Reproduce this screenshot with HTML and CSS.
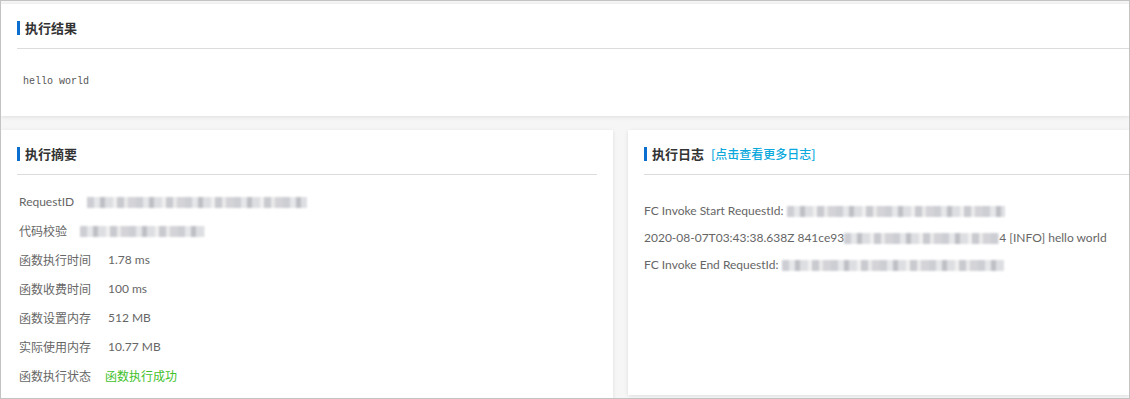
FILE: index.html
```html
<!DOCTYPE html>
<html lang="zh-CN">
<head>
<meta charset="utf-8">
<title>执行结果</title>
<link rel="stylesheet" href="styles.css">
</head>
<body>
<div class="frame">
  <section class="card card-result">
    <div class="card-head"><h2 class="title">执行结果</h2></div>
    <pre class="result-output">hello world</pre>
  </section>
  <div class="bottom-row">
    <section class="card card-summary">
      <div class="card-head head-inset"><h2 class="title">执行摘要</h2></div>
      <dl class="summary">
        <div class="row"><dt>RequestID</dt><dd><span class="redact w-220"></span></dd></div>
        <div class="row"><dt>代码校验</dt><dd><span class="redact w-125"></span></dd></div>
        <div class="row"><dt>函数执行时间</dt><dd>1.78 ms</dd></div>
        <div class="row"><dt>函数收费时间</dt><dd>100 ms</dd></div>
        <div class="row"><dt>函数设置内存</dt><dd>512 MB</dd></div>
        <div class="row"><dt>实际使用内存</dt><dd>10.77 MB</dd></div>
        <div class="row"><dt>函数执行状态</dt><dd class="ok">函数执行成功</dd></div>
      </dl>
    </section>
    <section class="card card-log">
      <div class="card-head"><h2 class="title">执行日志</h2><a class="more-link" href="#">[点击查看更多日志]</a></div>
      <div class="log">
        <p class="log-line">FC Invoke Start RequestId: <span class="redact w-218"></span></p>
        <p class="log-line">2020-08-07T03:43:38.638Z 841ce93<span class="redact w-155"></span>4 [INFO] hello world</p>
        <p class="log-line">FC Invoke End RequestId: <span class="redact w-222"></span></p>
      </div>
    </section>
  </div>
</div>
</body>
</html>
```
FILE: styles.css
```css
* { box-sizing: border-box; }
html, body { margin: 0; padding: 0; }
body {
  font-family: "Lato", "Noto Sans CJK SC", sans-serif;
  font-size: 12px;
  color: #666;
  background: #fff;
}
.frame {
  width: 1130px;
  height: 399px;
  border: 1px solid #c3c3c3;
  background: #f6f6f6;
  padding-top: 3px;
  overflow: hidden;
}
.card {
  background: #fff;
  box-shadow: 0 1px 4px rgba(0, 0, 0, 0.10);
}
.card-result { height: 112px; }
.card-head {
  height: 45px;
  margin-left: 16px;
  padding-top: 3px;
  border-bottom: 1px solid #dcdcdc;
  display: flex;
  align-items: center;
}
.head-inset { margin-right: 16px; }
.title {
  margin: 0;
  font-family: "Noto Sans CJK SC", sans-serif;
  font-size: 13px;
  font-weight: 600;
  color: #333;
  line-height: 14px;
  border-left: 3px solid #0a6fcf;
  padding-left: 5px;
}
.more-link {
  margin-left: 7px;
  font-family: "Noto Sans CJK SC", sans-serif;
  font-size: 12px;
  font-weight: 500;
  color: #0aa8dc;
  text-decoration: none;
}
.result-output {
  margin: 0;
  padding: 25px 0 0 22px;
  font-family: "Liberation Mono", monospace;
  font-size: 10px;
  line-height: 16px;
  color: #555;
}
.bottom-row {
  margin-top: 14px;
  display: grid;
  grid-template-columns: 612px 1fr;
  column-gap: 15px;
  align-items: start;
}
.card-summary { min-height: 300px; }
.card-log { min-height: 265px; }
.summary {
  margin: 0;
  padding: 12px 18px 16px;
}
.row {
  display: flex;
  align-items: center;
  height: 29px;
}
.row dt {
  margin: 0;
  min-width: 72px;
  margin-right: 17px;
}
.row:nth-child(1) dt, .row:nth-child(2) dt { min-width: 0; margin-right: 13px; }
.row dd { margin: 0; }
.row dd.ok { color: #3fc12b; margin-left: -3px; }
.log { padding: 22px 0 0 16px; }
.log-line {
  margin: 0;
  height: 27px;
  line-height: 27px;
  white-space: nowrap;
}
.redact {
  display: inline-block;
  height: 11px;
  vertical-align: -2px;
  background:
    repeating-linear-gradient(90deg,
      #c4c6cc 0 7px, #e2e3e6 7px 13px, #b3b5bc 13px 18px, #d8d9dd 18px 26px,
      #eeeeef 26px 30px, #c0c1c7 30px 37px, #e6e6e8 37px 41px, #cdcdd2 41px 49px);
  filter: blur(1px);
  opacity: 0.85;
}
.w-220 { width: 220px; }
.w-125 { width: 125px; }
.w-218 { width: 218px; }
.w-155 { width: 155px; }
.w-222 { width: 222px; }
```
